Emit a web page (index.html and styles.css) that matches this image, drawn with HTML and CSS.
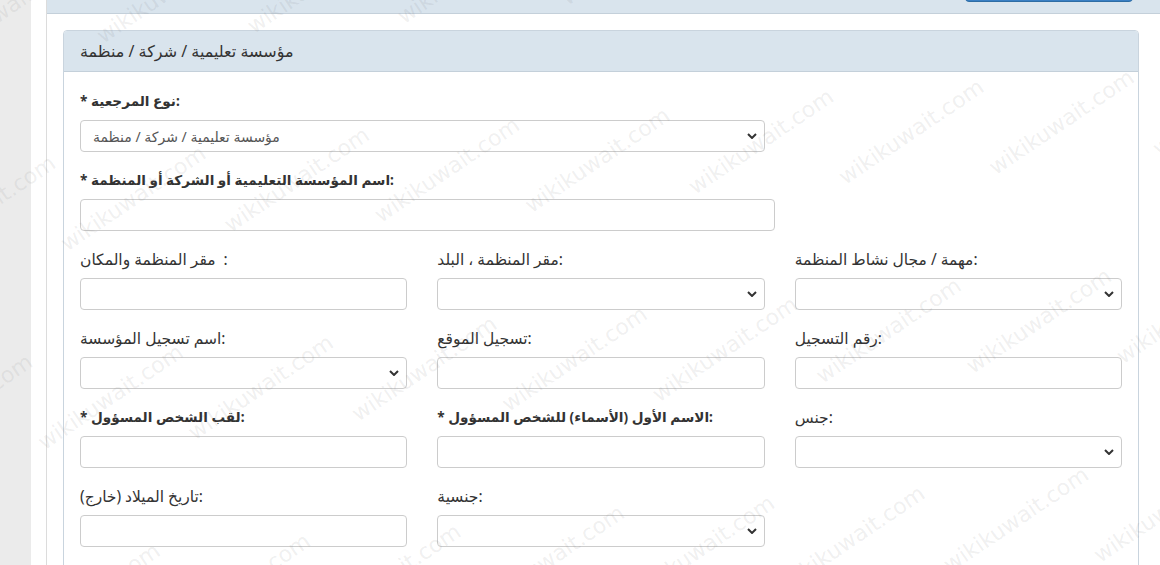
FILE: index.html
```html
<!DOCTYPE html>
<html lang="ar">
<head>
<meta charset="utf-8">
<title>مؤسسة تعليمية / شركة / منظمة</title>
<link rel="stylesheet" href="styles.css">
</head>
<body>
<div class="page">
  <aside class="sidebar"></aside>
  <main class="content">
    <section class="outer-panel">
      <div class="outer-head"><button class="btn-primary" type="button"></button></div>
      <div class="outer-body">
        <section class="panel">
          <div class="panel-heading">مؤسسة تعليمية / شركة / منظمة</div>
          <div class="panel-body">
            <div class="row">
              <div class="form-group span-2">
                <label class="req">* نوع المرجعية:</label>
                <div class="select-wrap">
                  <select class="form-control"><option>مؤسسة تعليمية / شركة / منظمة</option></select>
                  <svg class="chev" viewBox="0 0 10 6" width="10" height="6"><path d="M1 1l4 4 4-4" fill="none" stroke="#333" stroke-width="2"/></svg>
                </div>
              </div>
            </div>
            <div class="row">
              <div class="form-group span-2">
                <label class="req">* اسم المؤسسة التعليمية أو الشركة أو المنظمة:</label>
                <input class="form-control wide" type="text">
              </div>
            </div>
            <div class="row">
              <div class="form-group">
                <label>مقر المنظمة والمكان<span class="colon-gap">:</span></label>
                <input class="form-control" type="text">
              </div>
              <div class="form-group">
                <label>مقر المنظمة ، البلد:</label>
                <div class="select-wrap">
                  <select class="form-control"><option></option></select>
                  <svg class="chev" viewBox="0 0 10 6" width="10" height="6"><path d="M1 1l4 4 4-4" fill="none" stroke="#333" stroke-width="2"/></svg>
                </div>
              </div>
              <div class="form-group">
                <label>مهمة / مجال نشاط المنظمة:</label>
                <div class="select-wrap">
                  <select class="form-control"><option></option></select>
                  <svg class="chev" viewBox="0 0 10 6" width="10" height="6"><path d="M1 1l4 4 4-4" fill="none" stroke="#333" stroke-width="2"/></svg>
                </div>
              </div>
            </div>
            <div class="row">
              <div class="form-group">
                <label>اسم تسجيل المؤسسة:</label>
                <div class="select-wrap">
                  <select class="form-control"><option></option></select>
                  <svg class="chev" viewBox="0 0 10 6" width="10" height="6"><path d="M1 1l4 4 4-4" fill="none" stroke="#333" stroke-width="2"/></svg>
                </div>
              </div>
              <div class="form-group">
                <label>تسجيل الموقع:</label>
                <input class="form-control" type="text">
              </div>
              <div class="form-group">
                <label>رقم التسجيل:</label>
                <input class="form-control" type="text">
              </div>
            </div>
            <div class="row">
              <div class="form-group">
                <label class="req">* لقب الشخص المسؤول:</label>
                <input class="form-control" type="text">
              </div>
              <div class="form-group">
                <label class="req">* الاسم الأول (الأسماء) للشخص المسؤول:</label>
                <input class="form-control" type="text">
              </div>
              <div class="form-group">
                <label>جنس:</label>
                <div class="select-wrap">
                  <select class="form-control"><option></option></select>
                  <svg class="chev" viewBox="0 0 10 6" width="10" height="6"><path d="M1 1l4 4 4-4" fill="none" stroke="#333" stroke-width="2"/></svg>
                </div>
              </div>
            </div>
            <div class="row">
              <div class="form-group">
                <label>تاريخ الميلاد (خارج):</label>
                <input class="form-control" type="text">
              </div>
              <div class="form-group">
                <label>جنسية:</label>
                <div class="select-wrap">
                  <select class="form-control"><option></option></select>
                  <svg class="chev" viewBox="0 0 10 6" width="10" height="6"><path d="M1 1l4 4 4-4" fill="none" stroke="#333" stroke-width="2"/></svg>
                </div>
              </div>
            </div>
          </div>
        </section>
      </div>
    </section>
  </main>
</div>
<div class="watermark" aria-hidden="true">
  <div class="wm-field">
    <div class="wm-row">wikikuwait.com wikikuwait.com wikikuwait.com wikikuwait.com wikikuwait.com wikikuwait.com wikikuwait.com</div>
    <div class="wm-row">wikikuwait.com wikikuwait.com wikikuwait.com wikikuwait.com wikikuwait.com wikikuwait.com wikikuwait.com</div>
    <div class="wm-row">wikikuwait.com wikikuwait.com wikikuwait.com wikikuwait.com wikikuwait.com wikikuwait.com wikikuwait.com</div>
    <div class="wm-row">wikikuwait.com wikikuwait.com wikikuwait.com wikikuwait.com wikikuwait.com wikikuwait.com wikikuwait.com</div>
    <div class="wm-row">wikikuwait.com wikikuwait.com wikikuwait.com wikikuwait.com wikikuwait.com wikikuwait.com wikikuwait.com</div>
    <div class="wm-row">wikikuwait.com wikikuwait.com wikikuwait.com wikikuwait.com wikikuwait.com wikikuwait.com wikikuwait.com</div>
    <div class="wm-row">wikikuwait.com wikikuwait.com wikikuwait.com wikikuwait.com wikikuwait.com wikikuwait.com wikikuwait.com</div>
    <div class="wm-row">wikikuwait.com wikikuwait.com wikikuwait.com wikikuwait.com wikikuwait.com wikikuwait.com wikikuwait.com</div>
    <div class="wm-row">wikikuwait.com wikikuwait.com wikikuwait.com wikikuwait.com wikikuwait.com wikikuwait.com wikikuwait.com</div>
    <div class="wm-row">wikikuwait.com wikikuwait.com wikikuwait.com wikikuwait.com wikikuwait.com wikikuwait.com wikikuwait.com</div>
    <div class="wm-row">wikikuwait.com wikikuwait.com wikikuwait.com wikikuwait.com wikikuwait.com wikikuwait.com wikikuwait.com</div>
    <div class="wm-row">wikikuwait.com wikikuwait.com wikikuwait.com wikikuwait.com wikikuwait.com wikikuwait.com wikikuwait.com</div>
    <div class="wm-row">wikikuwait.com wikikuwait.com wikikuwait.com wikikuwait.com wikikuwait.com wikikuwait.com wikikuwait.com</div>
    <div class="wm-row">wikikuwait.com wikikuwait.com wikikuwait.com wikikuwait.com wikikuwait.com wikikuwait.com wikikuwait.com</div>
    <div class="wm-row">wikikuwait.com wikikuwait.com wikikuwait.com wikikuwait.com wikikuwait.com wikikuwait.com wikikuwait.com</div>
    <div class="wm-row">wikikuwait.com wikikuwait.com wikikuwait.com wikikuwait.com wikikuwait.com wikikuwait.com wikikuwait.com</div>
    <div class="wm-row">wikikuwait.com wikikuwait.com wikikuwait.com wikikuwait.com wikikuwait.com wikikuwait.com wikikuwait.com</div>
    <div class="wm-row">wikikuwait.com wikikuwait.com wikikuwait.com wikikuwait.com wikikuwait.com wikikuwait.com wikikuwait.com</div>
    <div class="wm-row">wikikuwait.com wikikuwait.com wikikuwait.com wikikuwait.com wikikuwait.com wikikuwait.com wikikuwait.com</div>
    <div class="wm-row">wikikuwait.com wikikuwait.com wikikuwait.com wikikuwait.com wikikuwait.com wikikuwait.com wikikuwait.com</div>
  </div>
</div>
</body>
</html>
```

FILE: styles.css
```css
* { box-sizing: border-box; }

html, body {
  margin: 0;
  padding: 0;
  background: #ffffff;
  overflow: hidden;
}

body {
  font-family: "Noto Sans", "DejaVu Sans", sans-serif;
  font-size: 15px;
  color: #333333;
  width: 1160px;
  height: 565px;
  position: relative;
}

.page {
  display: flex;
  height: 565px;
}

.sidebar {
  flex: none;
  width: 31px;
  background: #ebebeb;
}

.content {
  flex: 1;
  min-width: 0;
}

.outer-panel {
  margin: -36px 0 0 15px;
  width: 1140px;
  border: 1px solid #dcdcdc;
  background: #ffffff;
}

.outer-head {
  height: 49px;
  background: #d9e4ed;
  border-bottom: 1px solid #c4d0da;
  display: flex;
  justify-content: flex-end;
  align-items: flex-end;
  padding: 0 52px 11px 0;
}

.btn-primary {
  width: 168px;
  height: 34px;
  border: 1px solid #2e6da4;
  border-radius: 4px;
  background: #3a7fc3;
  padding: 0;
}

.outer-body {
  padding: 16px 46px 16px 16px;
}

.panel {
  border: 1px solid #c9d4de;
  border-radius: 4px;
  background: #ffffff;
}

.panel-heading {
  height: 41px;
  line-height: 40px;
  padding: 0 16px;
  background: #d9e4ed;
  border-bottom: 1px solid #c4d0da;
  border-radius: 3px 3px 0 0;
  font-size: 16px;
  color: #333333;
}

.panel-body {
  padding: 18px 16px 40px 16px;
}

.row {
  display: grid;
  grid-template-columns: repeat(3, 1fr);
  column-gap: 30px;
}

.form-group {
  margin-bottom: 17px;
}

.span-2 {
  grid-column: 1 / span 2;
}

label {
  display: block;
  height: 22px;
  line-height: 22px;
  margin-bottom: 8px;
  font-size: 15.5px;
  white-space: nowrap;
  color: #333333;
}

label.req {
  font-weight: 700;
  font-size: 13.6px;
}

.colon-gap {
  margin-left: 8px;
}

.form-control {
  display: block;
  width: 100%;
  height: 32px;
  padding: 0 12px;
  border: 1px solid #cccccc;
  border-radius: 4px;
  background: #ffffff;
  font-family: "Noto Sans", "DejaVu Sans", sans-serif;
  font-size: 14px;
  color: #555555;
  outline: none;
}

.form-control.wide {
  width: calc(100% + 10px);
}

select.form-control {
  appearance: none;
  -webkit-appearance: none;
  padding-right: 30px;
}

.select-wrap {
  position: relative;
}

.chev {
  position: absolute;
  right: 8px;
  top: 13px;
  pointer-events: none;
}

.watermark {
  position: absolute;
  left: 0;
  top: 0;
  width: 1160px;
  height: 565px;
  overflow: hidden;
  pointer-events: none;
}

.wm-field {
  position: absolute;
  left: -520px;
  top: -560px;
  width: 2600px;
  transform: rotate(-34deg);
  transform-origin: 50% 50%;
  display: flex;
  flex-direction: column;
  gap: 50px;
}

.wm-row {
  white-space: nowrap;
  font-family: "DejaVu Sans", sans-serif;
  font-size: 22px;
  line-height: 26px;
  word-spacing: 230px;
  color: rgba(110, 110, 110, 0.11);
}

.wm-row:nth-child(3n+2) {
  padding-left: 130px;
}

.wm-row:nth-child(3n) {
  padding-left: 260px;
}
```
